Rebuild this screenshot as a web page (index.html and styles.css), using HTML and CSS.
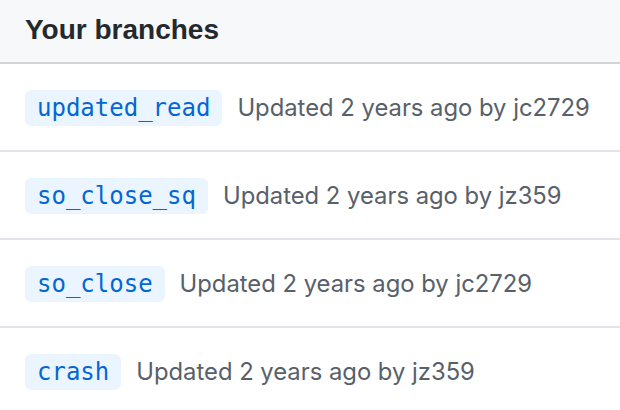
FILE: index.html
```html
<!DOCTYPE html>
<html>
<head>
<meta charset="utf-8">
<link rel="stylesheet" href="styles.css">
</head>
<body>
<div class="box">
  <div class="box-header">Your branches</div>
  <div class="row"><span class="branch">updated_read</span><span class="meta">Updated 2 years ago by jc2729</span></div>
  <div class="row"><span class="branch">so_close_sq</span><span class="meta">Updated 2 years ago by jz359</span></div>
  <div class="row"><span class="branch">so_close</span><span class="meta">Updated 2 years ago by jc2729</span></div>
  <div class="row"><span class="branch">crash</span><span class="meta">Updated 2 years ago by jz359</span></div>
</div>
</body>
</html>
```
FILE: styles.css
```css
html, body {
  margin: 0;
  padding: 0;
  background: #ffffff;
}
.box {
  width: 620px;
  height: 410px;
  overflow: hidden;
  font-family: Inter, "Liberation Sans", sans-serif;
}
.box-header {
  height: 64px;
  box-sizing: border-box;
  background: #f6f8fa;
  border-bottom: 2px solid #d1d5da;
  padding: 0 25px 2px;
  display: flex;
  align-items: center;
  font-family: "Liberation Sans", Inter, sans-serif;
  font-weight: 700;
  font-size: 28px;
  color: #24292e;
}
.row {
  height: 88px;
  box-sizing: border-box;
  border-bottom: 2px solid #e1e4e8;
  padding: 0 25px;
  display: flex;
  align-items: center;
}
.branch {
  font-family: "DejaVu Sans Mono", "Liberation Mono", monospace;
  font-size: 24px;
  color: #0366d6;
  background: #eaf5ff;
  border-radius: 6px;
  height: 36px;
  line-height: 36px;
  padding: 0 12px;
  margin-right: 15px;
  margin-top: 2px;
}
.meta {
  font-size: 23.8px;
  color: #586069;
  margin-top: 1px;
}
```
